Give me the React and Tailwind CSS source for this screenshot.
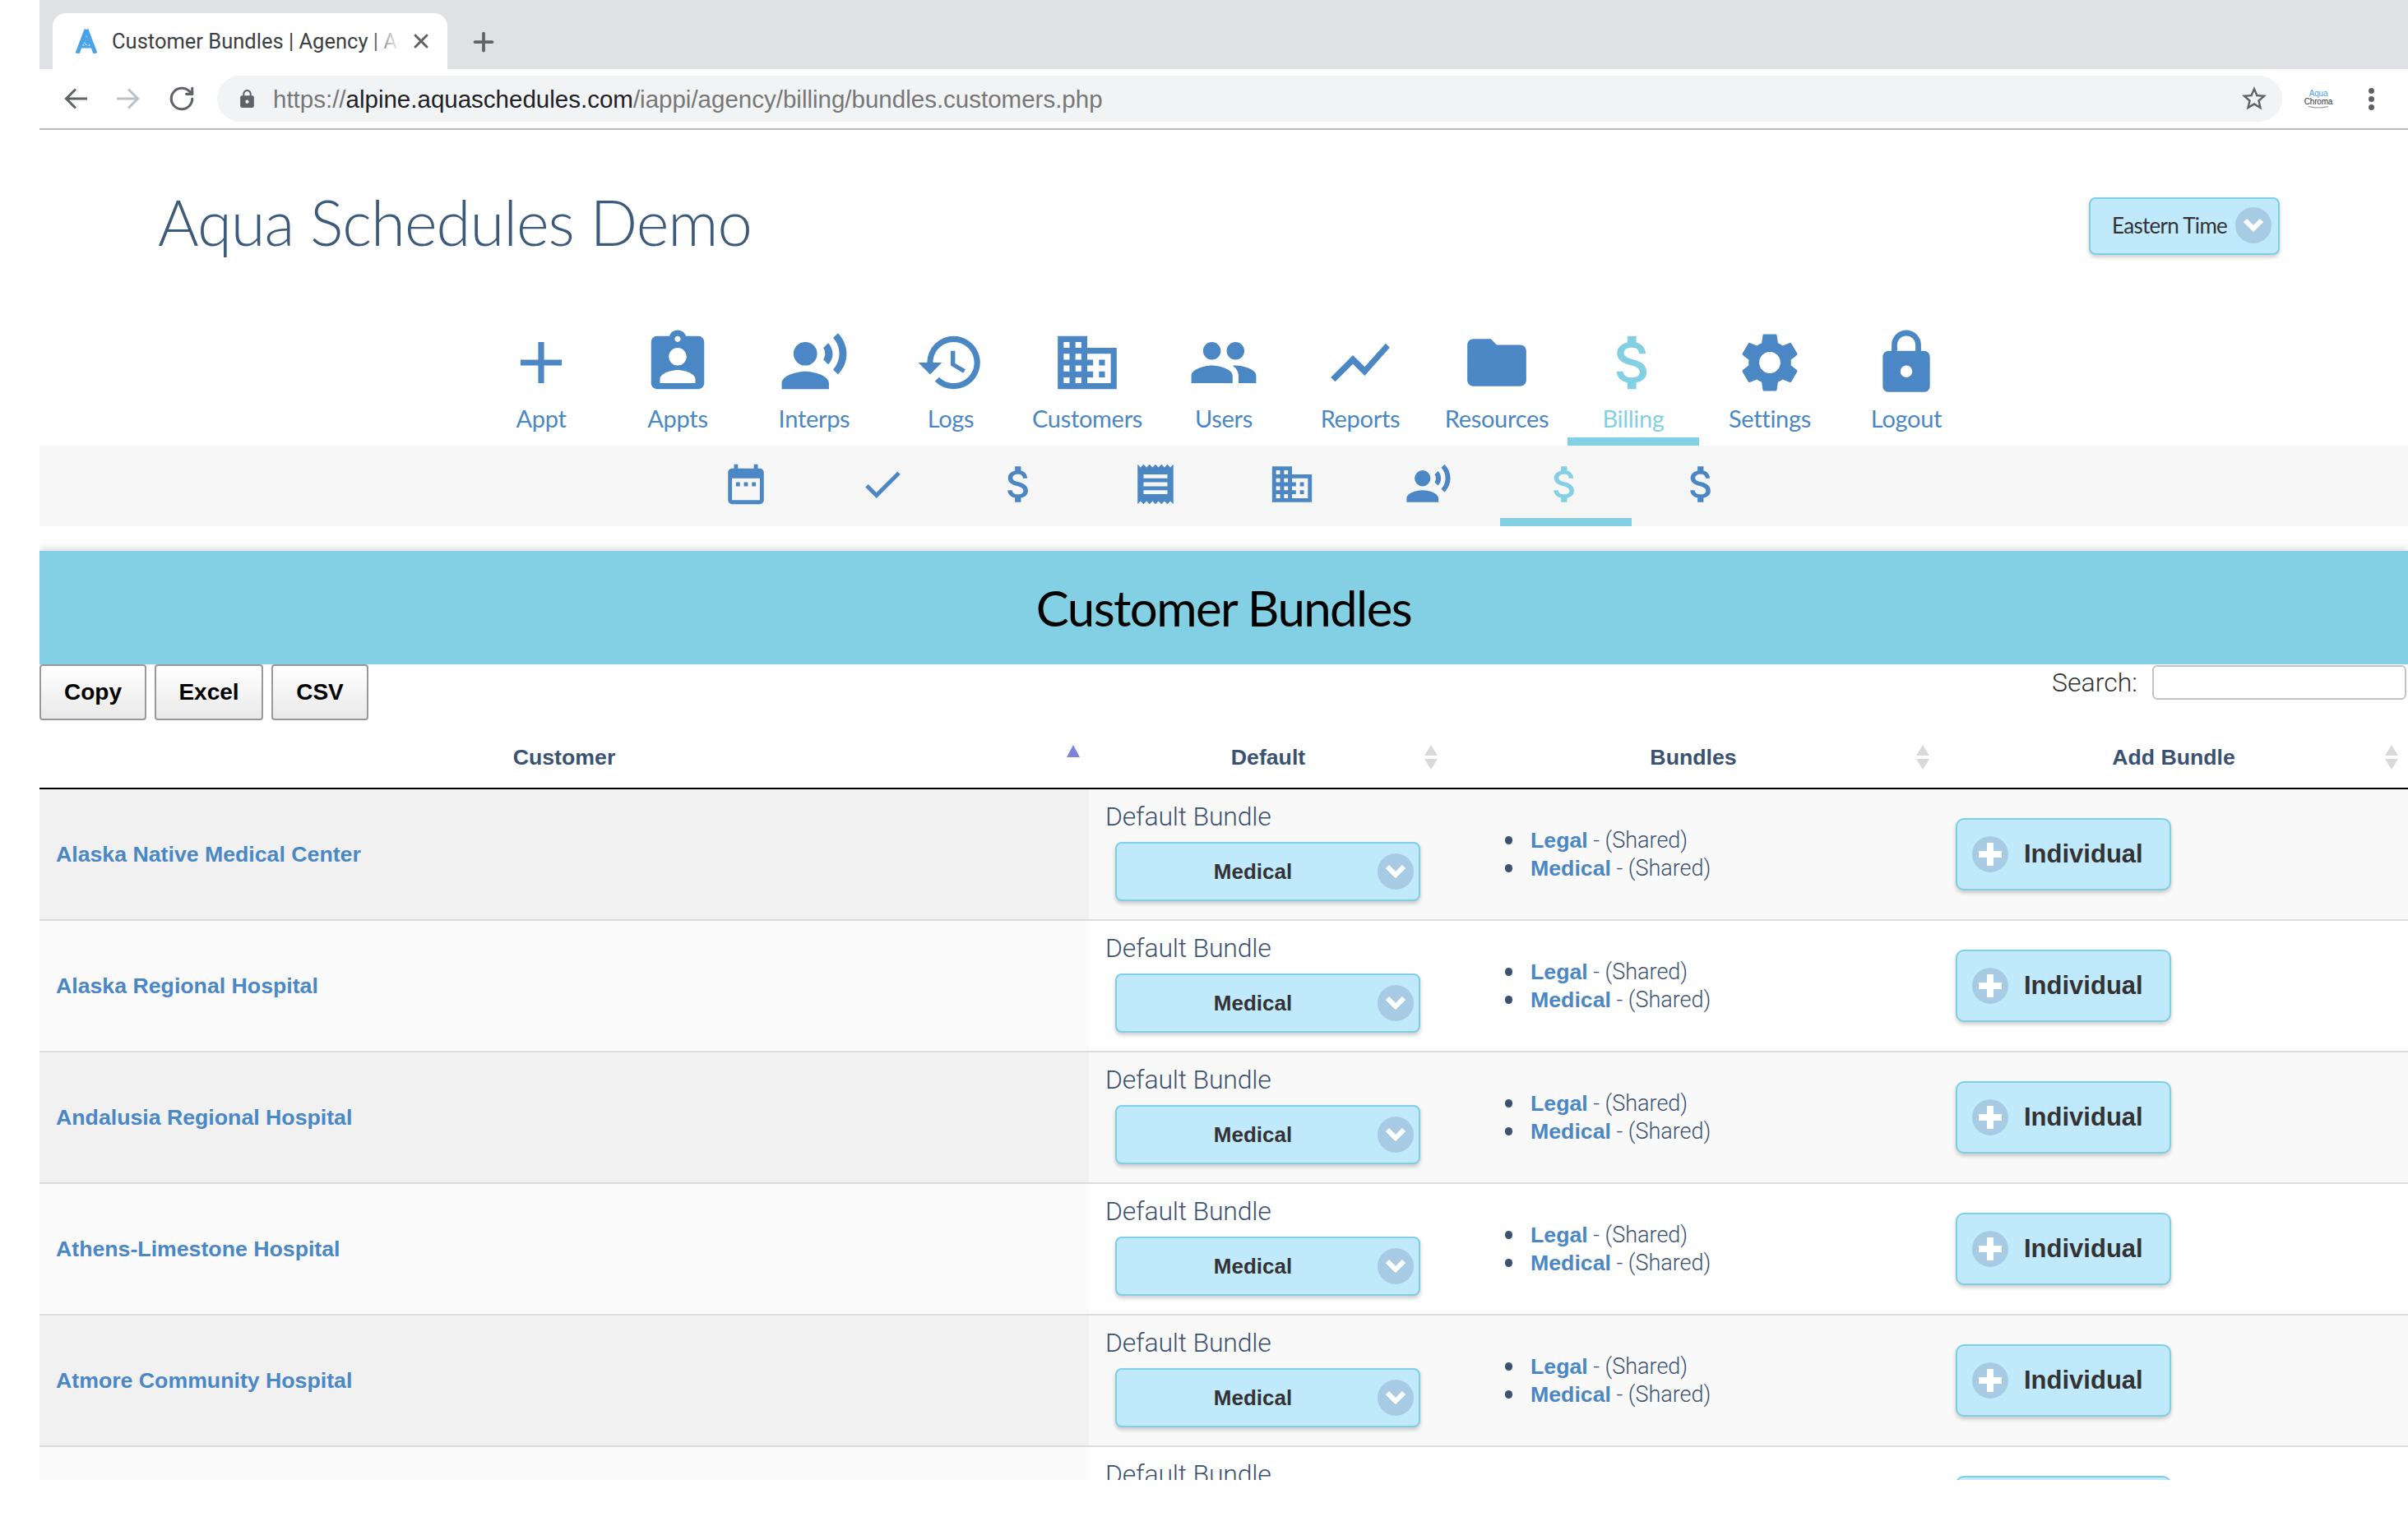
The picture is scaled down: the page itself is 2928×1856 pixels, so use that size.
import React from 'react';
import { RotateCw, Plus, X } from 'lucide-react';
import {
    MdAdd, MdAssignmentInd, MdRecordVoiceOver, MdHistory, MdDomain, MdPeople, MdShowChart,
    MdFolder, MdAttachMoney, MdSettings, MdLock, MdDateRange, MdCheck, MdReceipt,
    MdStarBorder
} from 'react-icons/md';

const navItems = [
    { label: 'Appt', icon: MdAdd },
    { label: 'Appts', icon: MdAssignmentInd },
    { label: 'Interps', icon: MdRecordVoiceOver },
    { label: 'Logs', icon: MdHistory },
    { label: 'Customers', icon: MdDomain },
    { label: 'Users', icon: MdPeople },
    { label: 'Reports', icon: MdShowChart },
    { label: 'Resources', icon: MdFolder },
    { label: 'Billing', icon: MdAttachMoney, active: true },
    { label: 'Settings', icon: MdSettings },
    { label: 'Logout', icon: MdLock },
];

const subItems = [
    { icon: MdDateRange },
    { icon: MdCheck },
    { icon: MdAttachMoney },
    { icon: MdReceipt },
    { icon: MdDomain },
    { icon: MdRecordVoiceOver },
    { icon: MdAttachMoney, active: true },
    { icon: MdAttachMoney },
];

const customers = [
    'Alaska Native Medical Center',
    'Alaska Regional Hospital',
    'Andalusia Regional Hospital',
    'Athens-Limestone Hospital',
    'Atmore Community Hospital',
    'Baptist Medical Center South',
];

function SortArrows() {
    return (
        <svg width="16" height="30" viewBox="0 0 16 30" className="absolute right-[12px] top-[30px]">
            <path d="M8 0L16 13H0Z" fill="#d9d9d9" />
            <path d="M8 30L16 17H0Z" fill="#d9d9d9" />
        </svg>
    );
}

function Chevron() {
    return (
        <svg width="24" height="18" viewBox="0 0 24 18" fill="none" stroke="white" strokeWidth="6">
            <path d="M2 3L12 13L22 3" />
        </svg>
    );
}

function BrowserBar() {
    return (
        <div className="font-['Liberation_Sans',sans-serif]">
            <div className="h-[84px] bg-[#dfe1e5] flex items-end pl-[16px]">
                <div className="w-[480px] h-[68px] bg-white rounded-t-[16px] flex items-center pl-[28px]">
                    <svg width="26" height="30" viewBox="0 0 26 30" className="shrink-0">
                        <path d="M13 1L2 30M13 1L24 30" stroke="#4aa3e8" strokeWidth="5" fill="none" />
                        <path d="M5 22H21" stroke="#4aa3e8" strokeWidth="3" />
                        <path d="M13 9C10 13 9 15 9 17A4 4 0 0 0 17 17C17 15 16 13 13 9Z" fill="#4aa3e8" />
                        <path d="M11 16.5A2.5 2.5 0 0 0 13.5 19.5" stroke="white" strokeWidth="1" fill="none" />
                    </svg>
                    <div className="relative ml-[18px] w-[350px] overflow-hidden whitespace-nowrap text-[25.5px] text-[#3c4043] font-['Roboto',sans-serif]">
                        Customer Bundles | Agency | Aqua Schedules
                        <div className="absolute right-0 top-0 bottom-0 w-[36px] bg-gradient-to-r from-transparent to-white" />
                    </div>
                    <X size={28} strokeWidth={2.5} className="ml-[12px] text-[#5f6368]" />
                </div>
                <Plus size={36} strokeWidth={2.5} className="ml-[26px] mb-[15px] text-[#5f6368]" />
            </div>
            <div className="h-[74px] bg-white border-b-2 border-[#b8b8b8] flex items-center pl-[30px]">
                <svg width="28" height="26" viewBox="0 0 28 26" fill="none" stroke="#5f6368" strokeWidth="3">
                    <path d="M14 1.5L2.5 13L14 24.5M3 13H28" />
                </svg>
                <svg width="28" height="26" viewBox="0 0 28 26" fill="none" stroke="#bdc1c6" strokeWidth="3" className="ml-[36px]">
                    <path d="M14 1.5L25.5 13L14 24.5M25 13H0" />
                </svg>
                <RotateCw size={34} strokeWidth={2.2} className="ml-[34px] text-[#5f6368]" />
                <div className="ml-[26px] w-[2511px] shrink-0 flex items-center h-[56px] bg-[#f1f3f4] rounded-full pr-[16px]">
                    <MdLock size={25} className="ml-[24px] text-[#5f6368]" />
                    <div className="ml-[19px] pt-[2px] text-[29.5px] text-[#777] whitespace-nowrap">
                        https://<span className="text-[#202124]">alpine.aquaschedules.com</span>/iappi/agency/billing/bundles.customers.php
                    </div>
                    <MdStarBorder size={36} className="ml-auto text-[#5f6368]" />
                </div>
                <div className="ml-[27px] w-[34px] flex flex-col items-center text-[10px] leading-[10px] tracking-[-0.2px]">
                    <span className="text-[#4aa3e8]">Aqua</span>
                    <span className="text-[#333]">Chroma</span>
                    <svg width="26" height="3" viewBox="0 0 26 3" fill="none" stroke="#9a9a9a" strokeWidth="1.2">
                        <path d="M1 0.5Q13 3.5 25 0.5" />
                    </svg>
                </div>
                <div className="ml-[44px] flex flex-col gap-[3px]">
                    <span className="w-[7px] h-[7px] rounded-full bg-[#5f6368]" />
                    <span className="w-[7px] h-[7px] rounded-full bg-[#5f6368]" />
                    <span className="w-[7px] h-[7px] rounded-full bg-[#5f6368]" />
                </div>
            </div>
        </div>
    );
}

function MainNav() {
    return (
        <nav className="h-[144px] flex justify-center font-['Lato',sans-serif]">
            {navItems.map((item) => {
                const Icon = item.icon;
                return (
                    <a
                        key={item.label}
                        className={`w-[160px] mx-[3px] flex flex-col items-center border-b-[10px] ${item.active ? 'border-[#83d0e5] text-[#83d0e5]' : 'border-transparent text-[#4b87c5]'}`}
                    >
                        <Icon size={86} className="shrink-0" />
                        <span className="mt-[7px] text-[29px] leading-[36px] tracking-[-0.3px] whitespace-nowrap">{item.label}</span>
                    </a>
                );
            })}
        </nav>
    );
}

function SubNav() {
    return (
        <div className="h-[98px] bg-[#f6f6f6] flex justify-center pl-[2px]">
            {subItems.map((item, i) => {
                const Icon = item.icon;
                return (
                    <a
                        key={i}
                        className={`w-[160px] mx-[3px] pt-[18px] pr-[2px] flex justify-center border-b-[10px] ${item.active ? 'border-[#83d0e5] text-[#83d0e5]' : 'border-transparent text-[#4b87c5]'}`}
                    >
                        <Icon size={58} />
                    </a>
                );
            })}
        </div>
    );
}

function BundleRow({ name, index }) {
    const odd = index % 2 === 0;
    const shared = "font-light font-['Roboto',sans-serif] text-[27px]";
    return (
        <tr className="h-[160px]">
            <td className={`border-b-2 border-[#dddddd] pl-[20px] pt-[1px] text-[26.7px] font-bold text-[#4b87c5] ${odd ? 'bg-[#f1f1f1]' : 'bg-[#fafafa]'}`}>
                {name}
            </td>
            <td className={`border-b-2 border-[#dddddd] align-top pt-[14px] pl-[20px] ${odd ? 'bg-[#f9f9f9]' : 'bg-white'}`}>
                <div className="text-[32px] leading-[38px] font-light tracking-[-0.2px] font-['Roboto',sans-serif] text-[#3a5272]">Default Bundle</div>
                <div className="relative mt-[12px] ml-[12px] w-[371px] h-[72px] flex items-center justify-center pr-[36px] bg-[#c1e9fc] border-2 border-[#7fcfe3] rounded-[8px] shadow-[0_3px_5px_rgba(0,0,0,0.2)] text-[26px] font-bold text-[#333]">
                    Medical
                    <span className="absolute right-[6px] top-[12px] w-[44px] h-[44px] rounded-full bg-[#a6cbe2] flex items-center justify-center">
                        <Chevron />
                    </span>
                </div>
            </td>
            <td className={`border-b-2 border-[#dddddd] pl-[70px] ${odd ? 'bg-[#f9f9f9]' : 'bg-white'}`}>
                <ul className="text-[26.7px] leading-[34px] text-[#3a5272]">
                    {['Legal', 'Medical'].map((b) => (
                        <li key={b} className="flex items-center">
                            <span className="w-[9px] h-[10px] rounded-full bg-[#3a5272] mr-[22px]" />
                            <span className="font-bold text-[#4b87c5]">{b}</span>
                            <span className={`${shared} whitespace-pre`}> - (Shared)</span>
                        </li>
                    ))}
                </ul>
            </td>
            <td className={`border-b-2 border-[#dddddd] pl-[20px] ${odd ? 'bg-[#f9f9f9]' : 'bg-white'}`}>
                <button className="w-[262px] h-[88px] flex items-center pl-[18px] bg-[#c1e9fc] border-2 border-[#7fcfe3] rounded-[10px] shadow-[0_3px_5px_rgba(0,0,0,0.2)] text-[31px] font-bold text-[#333]">
                    <span className="w-[44px] h-[44px] rounded-full bg-[#a6cbe2] flex items-center justify-center">
                        <svg width="28" height="28" viewBox="0 0 28 28"><path d="M10 0H18V10H28V18H18V28H10V18H0V10H10Z" fill="white" /></svg>
                    </span>
                    <span className="ml-[19px]">Individual</span>
                </button>
            </td>
        </tr>
    );
}

export default function App() {
    return (
        <div className="h-[1800px] ml-[48px] bg-white overflow-hidden font-['Liberation_Sans',sans-serif]">
            <BrowserBar />

            <header className="h-[240px] flex justify-between pl-[144px] pr-[156px]">
                <h1 className="mt-[66px] font-['Lato',sans-serif] font-light text-[76px] leading-[92px] tracking-[-1px] text-[#3c5a7c] whitespace-nowrap">
                    Aqua Schedules Demo
                </h1>
                <div className="relative mt-[82px] w-[232px] h-[70px] flex items-center pl-[26px] pb-[2px] bg-[#c1e9fc] border-2 border-[#7fcfe3] rounded-[8px] shadow-[0_3px_5px_rgba(0,0,0,0.2)] font-['Lato',sans-serif] text-[26px] tracking-[-0.7px] text-[#333]">
                    Eastern Time
                    <span className="absolute right-[8px] top-[10px] w-[44px] h-[44px] rounded-full bg-[#a6cbe2] flex items-center justify-center">
                        <Chevron />
                    </span>
                </div>
            </header>

            <MainNav />
            <SubNav />

            <div className="mt-[30px] h-[138px] bg-[#83d0e5] shadow-[0_-4px_8px_rgba(0,0,0,0.12)] flex items-center justify-center font-['Lato',sans-serif] text-[60px] tracking-[-1.6px] text-black">
                Customer Bundles
            </div>

            {/* export buttons + search */}
            <div className="h-[68px] flex justify-between">
                <div className="flex gap-[10px]">
                    <button className="w-[130px] h-[68px] border-2 border-[#999] rounded-[4px] bg-gradient-to-b from-white to-[#e9e9e9] text-[28px] font-bold text-black">Copy</button>
                    <button className="w-[132px] h-[68px] border-2 border-[#999] rounded-[4px] bg-gradient-to-b from-white to-[#e9e9e9] text-[28px] font-bold text-black">Excel</button>
                    <button className="w-[118px] h-[68px] border-2 border-[#999] rounded-[4px] bg-gradient-to-b from-white to-[#e9e9e9] text-[28px] font-bold text-black">CSV</button>
                </div>
                <label className="flex items-start text-[32px] font-light font-['Roboto',sans-serif] text-[#333] pr-[2px]">
                    <span className="leading-[44px]">Search:</span>
                    <input className="ml-[18px] mt-[1px] w-[309px] h-[42px] bg-white border-2 border-[#c4c4c4] rounded-[6px]" />
                </label>
            </div>

            <table className="w-[2880px] table-fixed border-separate border-spacing-0">
                <colgroup>
                    <col className="w-[1276px]" />
                    <col className="w-[436px]" />
                    <col className="w-[598px]" />
                    <col className="w-[570px]" />
                </colgroup>
                <thead>
                    <tr className="h-[84px] text-[26.7px] font-bold text-[#3a5272]">
                        <th className="relative border-b-2 border-black pt-[8px] text-center">
                            Customer
                            <svg width="16" height="15" viewBox="0 0 16 15" className="absolute right-[11px] top-[30px]">
                                <path d="M8 0L16 15H0Z" fill="#7b84d8" />
                            </svg>
                        </th>
                        <th className="relative border-b-2 border-black pt-[8px] text-center">Default<SortArrows /></th>
                        <th className="relative border-b-2 border-black pt-[8px] text-center">Bundles<SortArrows /></th>
                        <th className="relative border-b-2 border-black pt-[8px] text-center">Add Bundle<SortArrows /></th>
                    </tr>
                </thead>
                <tbody>
                    {customers.map((name, i) => (
                        <BundleRow key={name} name={name} index={i} />
                    ))}
                </tbody>
            </table>
        </div>
    );
}
